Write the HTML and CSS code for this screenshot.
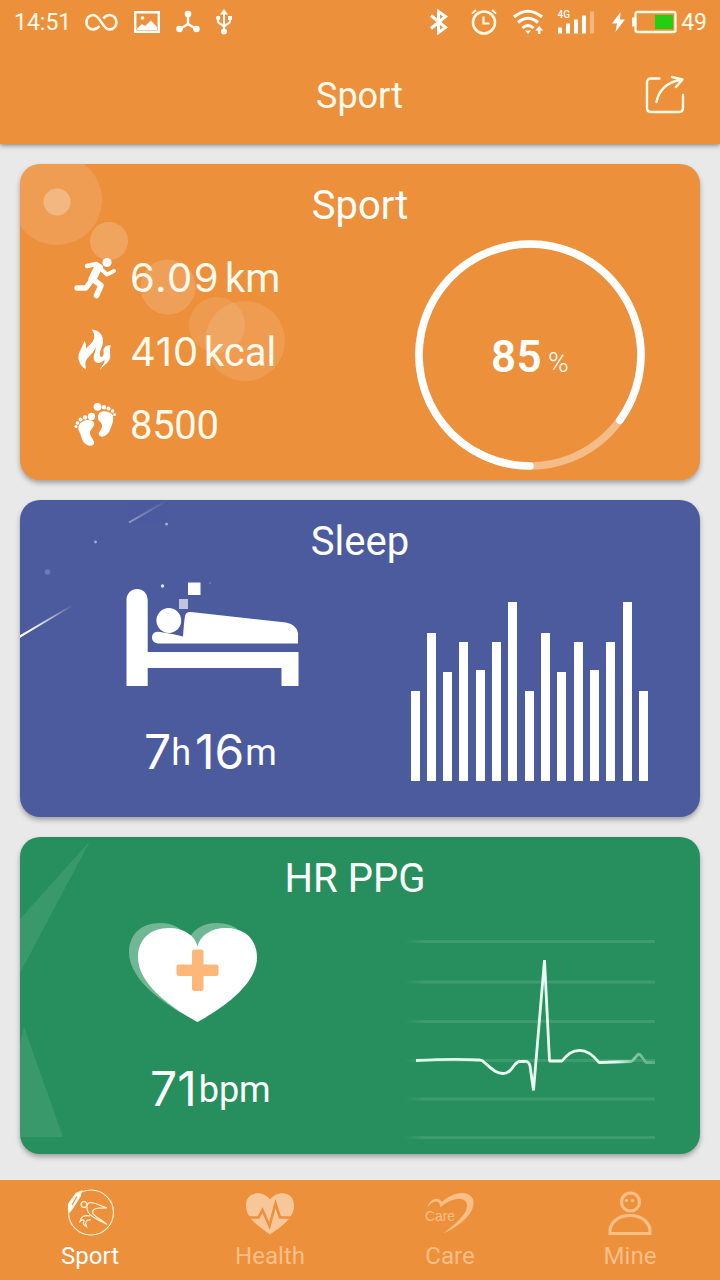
FILE: index.html
```html
<!DOCTYPE html>
<html lang="en">

<head>
  <meta charset="UTF-8">
  <meta name="viewport" content="width=device-width, initial-scale=1.0">
  <title>Sport</title>
  <link rel="stylesheet" href="styles.css">
</head>

<body>
  <header class="header">
    <div class="status-bar">
      <div class="status-left">
        <span class="time">14:51</span>
        <svg width="33" height="24" viewBox="0 0 33 24" fill="none" stroke="#fffbe8" stroke-width="2.6">
          <path d="M14.500 16C12.500 18.500 10.500 19.400 8.200 19.400C4.200 19.400 1.400 16.200 1.400 12.200C1.400 8.200 4.200 5 8.200 5C15.500 5 17 19.400 24.600 19.400C28.600 19.400 31.400 16.200 31.400 12.200C31.400 8.200 28.600 5 24.600 5C22.200 5 20.200 6.200 18.300 8.600" />
        </svg>
        <svg width="26" height="24" viewBox="0 0 26 24">
          <path d="M1.200 2.200h23.600v19.600H1.200z" fill="none" stroke="#fff" stroke-width="2.400" />
          <path d="M3 20v-1.500l5-4.500 3 2 6-5.500L23 17v3z" fill="#fff" />
          <circle cx="8.500" cy="8" r="1.800" fill="#fff" />
        </svg>
        <svg width="24" height="24" viewBox="0 0 24 24" fill="#fff">
          <path d="M12 3v11L4 19M12 14l8 5" fill="none" stroke="#fff" stroke-width="2.400" />
          <circle cx="12" cy="4" r="3.300" />
          <circle cx="3.500" cy="19" r="3.300" />
          <circle cx="20.500" cy="19" r="3.300" />
        </svg>
        <svg width="16" height="26" viewBox="0 0 16 26" fill="#fff">
          <path d="M8 3v20M2 8v4c0 3.500 6 3 6 6.500M14 8v4c0 3.500-6 3-6 6.500" fill="none" stroke="#fff" stroke-width="2" />
          <path d="M8 0l4 5.500H4z" />
          <circle cx="2.200" cy="9" r="2.200" />
          <path d="M12 7h4v4h-4z" />
          <circle cx="8" cy="22.500" r="3" />
        </svg>
      </div>
      <div class="status-right">
        <svg class="bluetooth" width="20" height="26" viewBox="0 0 20 26" fill="none" stroke="#fff" stroke-width="3">
          <path d="M2 6.500l14.500 12L9.500 23.500V2.500l7 5L2 19.500" />
        </svg>
        <svg class="alarm" width="26" height="26" viewBox="0 0 26 26" fill="none" stroke="#fffbe8" stroke-width="2.600">
          <circle cx="13" cy="13.500" r="11" />
          <path d="M12.500 7.500v7h6" stroke-width="2.200" />
          <path d="M1 4.500L5 1M25 4.500L21 1" stroke-width="2" />
        </svg>
        <svg class="wifi" width="30" height="26" viewBox="0 0 30 26" fill="none" stroke="#fff" stroke-width="3">
          <path d="M1 8Q15-3.500 29 8M5 13.500Q15 5 25 13.500M9.500 19Q15 14 20.500 19" />
          <path d="M12 21.500h6L15 25z" fill="#fff" stroke="none" />
          <path d="M26.200 17l4 4.500h-2.700V25h-2.600v-3.500h-2.700z" fill="#fff" stroke="none" />
        </svg>
        <svg class="signal" width="38" height="26" viewBox="0 0 38 26" fill="#fff">
          <text x="0.500" y="9" class="net">4G</text>
          <path d="M1 18.500h4v6H1zM9 14.500h4v10H9zM17 10.500h4v14h-4zM25 6.500h4v18h-4z" />
          <path d="M33 2.500h4v22h-4z" opacity="0.350" />
        </svg>
        <svg class="bolt" width="13" height="20" viewBox="0 0 13 20" fill="#fff">
          <path d="M8.500 0L0 11.500h5L3.500 20L13 7.500H8z" />
        </svg>
        <svg class="battery" width="45" height="24" viewBox="0 0 45 24">
          <path d="M0 7.500h3v9H0z" fill="#fff" />
          <rect x="3.500" y="2" width="40" height="20" rx="2" fill="none" stroke="#fffbe8" stroke-width="2.400" />
          <rect x="23" y="5" width="18" height="14" fill="#22cf12" />
        </svg>
        <span>49</span>
      </div>
    </div>
    <div class="title-bar">
      <h1>Sport</h1>
      <svg class="share" width="40" height="40" viewBox="0 0 40 40" fill="none" stroke="#fffbe8" stroke-width="2.400" stroke-linecap="round" stroke-linejoin="round">
        <path d="M14.500 3.500H6Q2 3.500 2 7.500V33Q2 37 6 37H34Q38 37 38 33V20" />
        <path d="M11.500 27C13.500 16 21 7.500 36.500 4.500M27 2L37.500 4.500L31 12" />
      </svg>
    </div>
  </header>

  <main class="cards">
    <section class="card sport">
      <svg class="decor" width="680" height="316" viewBox="0 0 680 316" fill="#fff">
        <circle cx="37" cy="36" r="45" opacity="0.120" />
        <circle cx="37" cy="38" r="13.500" opacity="0.280" />
        <circle cx="89" cy="77" r="19" opacity="0.190" />
        <circle cx="148" cy="123" r="27.500" opacity="0.150" />
        <circle cx="197" cy="161" r="28" opacity="0.100" />
        <circle cx="225" cy="177" r="40" opacity="0.110" />
      </svg>
      <h2>Sport</h2>
      <div class="card-body">
        <div class="stats">
          <div class="stat">
            <svg width="44" height="42" viewBox="0 0 44 42" fill="none" stroke="#fff" stroke-linecap="round" stroke-linejoin="round">
              <circle cx="33" cy="4.500" r="4.600" fill="#fff" stroke="none" />
              <path d="M13 8L22.500 6L27 9L18.500 21" stroke-width="4.400" />
              <path d="M24 9.500L18.500 21" stroke-width="8" />
              <path d="M28 12L33 16.500L40 13" stroke-width="4" />
              <path d="M18.500 21L12 30H3" stroke-width="5.400" />
              <path d="M20 22L27 27.500L22.500 37.500" stroke-width="5.600" />
            </svg>
            <span class="num decimal">6.09</span><span class="unit">km</span>
          </div>
          <div class="stat">
            <svg width="44" height="42" viewBox="0 0 44 42" fill="#fff">
              <path d="M17.500 -1.500C26 -1 29.500 5 29 11C28.800 16 25 20 26 24.500C27.500 28 30.500 24.500 29.500 20C29 16 34 13.500 37 14.500C34.500 18 37.500 23 35.500 28.500C33.500 33 28.500 34.500 26 39.500C27 34.500 31 32.500 30.500 28.500C27 33 21.500 33 20 29C18.500 24.500 22.500 20 21.500 16C20 21.500 15.500 24.500 13 28C10.500 31.500 11.500 35 12 38.500C6 35 2.500 28 5.500 21C7.500 17 9.500 13.500 10 10C12 12 12.500 14 12 17.500C17 13 24.500 7 17.500 -1.500Z" />
            </svg>
            <span class="num">410</span><span class="unit">kcal</span>
          </div>
          <div class="stat">
            <svg width="44" height="44" viewBox="0 0 44 44" fill="#fff">
              <path d="M5 21C8 16 18 14 20 19C21 23 16 25 16 29C16 33 21 36 20 40C18 43 12 42 9.500 38C7 34 7 30 5 27C4 25 4 23 5 21Z" />
              <path d="M24 12C25 6 33 6 38 10C41 14 38 21 36 26C34 31 29 34 26 32C22 29 29 26 28 21C27 17 23 17 24 12Z" />
              <circle cx="23.500" cy="2.800" r="3.900" /><circle cx="30" cy="3.200" r="2.200" /><circle cx="34.500" cy="4.600" r="2" /><circle cx="38.500" cy="7" r="1.800" /><circle cx="40.500" cy="10.500" r="1.600" />
              <circle cx="17.500" cy="12.500" r="3.700" /><circle cx="11" cy="13.500" r="2.200" /><circle cx="6.500" cy="15.500" r="2" /><circle cx="3.500" cy="19" r="1.800" /><circle cx="2" cy="22.500" r="1.600" />
            </svg>
            <span class="steps">8500</span>
          </div>
        </div>
        <div class="ring">
          <svg class="ring-track" width="230" height="230" viewBox="0 0 230 230" fill="none" stroke="#fff" stroke-width="7.600">
            <circle cx="115" cy="115" r="111" opacity="0.400" />
            <path d="M115 226A111 111 0 1 1 204.800 180.200" stroke-linecap="round" />
          </svg>
          <span class="percent">85</span><span class="percent-sign">%</span>
        </div>
      </div>
    </section>

    <section class="card sleep">
      <svg class="decor" width="680" height="317" viewBox="0 0 680 317">
        <defs>
          <linearGradient id="trail" x1="0" y1="1" x2="1" y2="0">
            <stop offset="0" stop-color="#fff" />
            <stop offset="1" stop-color="#fff" stop-opacity="0" />
          </linearGradient>
        </defs>
        <path d="M0 135.500L53 105L0 137.800Z" fill="url(#trail)" />
        <path d="M0 136.500L53 105" stroke="url(#trail)" stroke-width="2" />
        <path d="M109 22.500L148 0" stroke="url(#trail)" stroke-width="2" opacity="0.400" />
        <circle cx="146.500" cy="24" r="1.500" fill="#a3acd8" />
        <circle cx="75.500" cy="42" r="1.400" fill="#a3acd8" />
        <circle cx="27.500" cy="72" r="2.800" fill="#6c79b5" />
        <circle cx="142.500" cy="86" r="1.700" fill="#dfe3f5" />
        <circle cx="190" cy="83" r="0.800" fill="#8791c4" />
      </svg>
      <h2>Sleep</h2>
      <div class="card-body">
        <div class="reading sleep-reading">
          <svg width="174" height="106" viewBox="0 0 174 106" fill="#fff">
            <path d="M0.500 104V17.500a10.600 10.600 0 0 1 21.200 0V70H172.500v34h-17V86H21.700v18z" />
            <circle cx="42.800" cy="38.500" r="12.400" />
            <path d="M30 50Q32 49 57 54.500Q58 40 59 34Q60 29.500 65 30L160 40.500Q171 43 172 51V61.500H32Q26 60.500 26 55.500Q26 51 30 50Z" />
            <path d="M62 0.500h12.500V13H62z" />
            <path d="M53 17h9v10h-9z" opacity="0.650" />
          </svg>
          <div class="value"><span class="big">7</span><span class="small h">h</span><span class="big">16</span><span class="small m">m</span></div>
        </div>
        <div class="bars">
          <div class="bar" style="height: 90px"></div>
          <div class="bar" style="height: 148px"></div>
          <div class="bar" style="height: 109px"></div>
          <div class="bar" style="height: 139px"></div>
          <div class="bar" style="height: 111px"></div>
          <div class="bar" style="height: 139px"></div>
          <div class="bar" style="height: 179px"></div>
          <div class="bar" style="height: 90px"></div>
          <div class="bar" style="height: 148px"></div>
          <div class="bar" style="height: 109px"></div>
          <div class="bar" style="height: 139px"></div>
          <div class="bar" style="height: 111px"></div>
          <div class="bar" style="height: 139px"></div>
          <div class="bar" style="height: 179px"></div>
          <div class="bar" style="height: 90px"></div>
        </div>
      </div>
    </section>

    <section class="card heart">
      <svg class="decor" width="680" height="317" viewBox="0 0 680 317" fill="#fff">
        <path d="M0 82L70 4L0 136Z" opacity="0.090" />
        <path d="M4 190L43 300H0V207Z" opacity="0.090" />
      </svg>
      <h2>HR PPG</h2>
      <div class="card-body">
        <div class="reading heart-reading">
          <svg width="130" height="101" viewBox="0 0 130 100" fill="#fff">
            <path d="M69.500 99.500C50 89 10 64 10 35C10 17 22 5.500 41 5.500C56 5.500 67 13 69.500 24C72 13 83 5.500 98 5.500C117 5.500 129 17 129 35C129 64 89 89 69.500 99.500Z" transform="translate(-9 -5)" opacity="0.350" />
            <path d="M69.500 99.500C50 89 10 64 10 35C10 17 22 5.500 41 5.500C56 5.500 67 13 69.500 24C72 13 83 5.500 98 5.500C117 5.500 129 17 129 35C129 64 89 89 69.500 99.500Z" />
            <rect x="64" y="27" width="11.500" height="41.500" rx="2.500" fill="#fdb879" />
            <rect x="48.500" y="42" width="42" height="11.500" rx="2.500" fill="#fdb879" />
          </svg>
          <div class="value"><span class="big">71</span><span class="small bpm">bpm</span></div>
        </div>
        <svg class="ecg" width="252" height="204" viewBox="0 0 252 204" fill="none">
          <defs>
            <linearGradient id="grid" gradientUnits="userSpaceOnUse" x1="0" y1="0" x2="251" y2="0">
              <stop offset="0" stop-color="#fff" stop-opacity="0" />
              <stop offset="0.080" stop-color="#fff" stop-opacity="0.110" />
              <stop offset="1" stop-color="#fff" stop-opacity="0.110" />
            </linearGradient>
            <linearGradient id="pulse" gradientUnits="userSpaceOnUse" x1="0" y1="0" x2="251" y2="0">
              <stop offset="0" stop-color="#d9f7e6" />
              <stop offset="0.400" stop-color="#eafff4" />
              <stop offset="0.840" stop-color="#eafff4" />
              <stop offset="0.900" stop-color="#8dccab" />
              <stop offset="1" stop-color="#5aab82" />
            </linearGradient>
          </defs>
          <path d="M0 4h251v3H0zM0 44.500h251v3H0zM0 84h251v3H0zM0 123h251v3H0zM0 161.500h251v3H0zM0 200h251v3H0z" fill="url(#grid)" />
          <path d="M12 124.500Q50 122.500 75 124Q78 123.500 81 127C88 133 92 137.500 99 137.500C109 137.500 109 125.500 116 125.500H120Q125 125 126 130L129.500 154.500L140.500 24L145.500 125H158C168 111.500 182 109.500 195 126.500L226 125.500Q228 126 230 123L234 118.500Q235 117.500 236.500 119L242 126.500H251" stroke="url(#pulse)" stroke-width="2.800" stroke-linejoin="bevel" />
        </svg>
      </div>
    </section>
  </main>

  <nav class="tabs">
    <a class="tab active">
      <svg width="48" height="48" viewBox="0 0 48 48" fill="none" stroke="#fff3dc" stroke-width="1.200">
        <circle cx="25" cy="24.500" r="22.500" />
        <path d="M2.500 21V16L10 5.500L15.500 3L14 8.500L6.500 20.500L3.500 24Z" fill="#fff" />
        <path d="M6 17L11 8.500" stroke="#ed903b" />
        <circle cx="18" cy="16.500" r="2.900" />
        <path d="M41 20C35 18 29 14.500 24 14.500C20.500 15 20 21 22.500 24.500C26 30.500 34 32 41 36.500C36 31.500 29 29.500 27 25.500C25.500 21.500 29 19.500 41 20Z" />
        <path d="M24 28C18.500 26.500 14.500 29 14 33.500C16 31.500 17.500 31.500 18 33C16.500 35.500 18 37.500 20.500 38.500C18.500 34.500 20 31 25 32" />
      </svg>
      <span>Sport</span>
    </a>
    <a class="tab">
      <svg width="50" height="48" viewBox="0 0 50 48">
        <path d="M25 46.500C16 40 1 31 1 18C0.500 3 18 2 25 11.500C32 2 49.500 3 49 18C49 31 34 40 25 46.500Z" fill="#f8c799" />
        <path d="M1 29.500H13.500L17.500 22L24.500 38L30.500 15.500L35 29.500H49" fill="none" stroke="#ed903b" stroke-width="2.600" />
      </svg>
      <span>Health</span>
    </a>
    <a class="tab">
      <svg width="50" height="48" viewBox="0 0 50 48" fill="#fabf87">
        <path d="M2 20C4 12 12 7 17 14C25 6 42 0 48 11C52 24 35 38 18 45.500C31 36 46 23 41 14C36 7 24 12 15 19.500C16 13 9 10 2 20Z" />
        <text x="0" y="33" class="care-word" textLength="30" lengthAdjust="spacingAndGlyphs">Care</text>
      </svg>
      <span>Care</span>
    </a>
    <a class="tab">
      <svg width="46" height="48" viewBox="0 0 46 48" fill="none" stroke="#fabf87" stroke-width="3.200">
        <circle cx="23.500" cy="14" r="9" />
        <path d="M3 45.500C2 35 11 27.500 23 27.500C35 27.500 44 35 43 45.500Z" />
        <circle cx="19.500" cy="12.500" r="1.700" fill="#fabf87" stroke="none" />
        <circle cx="25.500" cy="12.500" r="1.700" fill="#fabf87" stroke="none" />
      </svg>
      <span>Mine</span>
    </a>
  </nav>
</body>

</html>
```
FILE: styles.css
```css
* {
  box-sizing: border-box;
}

body {
  margin: 0;
  height: 1280px;
  display: flex;
  flex-direction: column;
  background-color: #eae9e9;
  font-family: Roboto, "Liberation Sans", sans-serif;
  color: white;
  overflow: hidden;
}

h1,
h2 {
  margin: 0;
  font-weight: 400;
  text-align: center;
}

svg {
  display: block;
  flex-shrink: 0;
  overflow: visible;
}

.header {
  height: 144px;
  background-color: #ed903b;
  box-shadow: 0 1px 5px rgba(0, 0, 0, 0.5);
}

.status-bar {
  display: flex;
  justify-content: space-between;
  height: 44px;
  padding: 0 13px 0 14px;
  font-size: 23px;
  color: #fffbe8;
}

.status-left,
.status-right {
  display: flex;
  align-items: center;
}

.status-left {
  gap: 16px;
}

.time {
  width: 55px;
}

.bluetooth {
  margin-right: 22px;
}

.alarm {
  margin-right: 16px;
}

.wifi {
  margin-right: 14px;
}

.signal {
  margin-right: 17px;
}

.bolt {
  margin-right: 7px;
}

.battery {
  margin-right: 4px;
}

.net {
  font-size: 10px;
  font-weight: 500;
}

.title-bar {
  display: flex;
  align-items: center;
  padding: 0 35px 0 74px;
  height: 102px;
}

.title-bar h1 {
  flex: 1;
  padding-top: 2px;
  font-size: 36px;
  color: #fffbee;
}

.cards {
  flex: 1;
  display: flex;
  flex-direction: column;
  gap: 20px;
  padding: 20px;
}

.card {
  position: relative;
  height: 317px;
  padding-top: 18px;
  border-radius: 20px;
  box-shadow: 0 3px 5px rgba(0, 0, 0, 0.3);
}

.card h2 {
  position: relative;
  font-size: 40px;
  line-height: 48px;
}

.card-body {
  position: relative;
  display: flex;
  margin-top: -1px;
}

.decor {
  position: absolute;
  top: 0;
  left: 0;
  border-radius: 20px;
  overflow: hidden;
}

.sport {
  height: 316px;
  background-color: #ed903b;
}

.sleep {
  background-color: #4c5b9e;
}

.heart {
  background-color: #268f5d;
}

.heart h2 {
  padding-right: 10px;
}

.stats {
  width: 395px;
  padding: 13px 0 0 54px;
  color: #fffbee;
}

.stat {
  display: flex;
  align-items: center;
  height: 73.5px;
  font-size: 40px;
}

.num {
  margin: -2px 0 0 12px;
  font-family: Inter, sans-serif;
  font-weight: 400;
  letter-spacing: 0.8px;
}

.decimal {
  letter-spacing: 1.5px;
}

.unit {
  margin-left: 5px;
}

.steps {
  margin-left: 12px;
  letter-spacing: -0.3px;
}

.ring {
  position: relative;
  display: flex;
  align-items: baseline;
  width: 230px;
  height: 230px;
  margin-top: 11px;
  padding: 91px 0 0 76px;
}

.ring-track {
  position: absolute;
  top: 0;
  left: 0;
}

.percent {
  font-size: 44px;
  font-weight: 600;
  letter-spacing: 0.3px;
}

.percent-sign {
  margin-left: 6px;
  font-size: 28px;
  font-weight: 300;
}

.reading {
  width: 384px;
}

.sleep-reading {
  padding: 17px 0 0 106px;
}

.heart-reading {
  padding: 20px 0 0 108px;
}

.value {
  display: flex;
  align-items: center;
  height: 56px;
  margin: 35px 0 0 18px;
}

.heart-reading .value {
  margin: 37px 0 0 22px;
}

.big {
  font-family: Inter, sans-serif;
  font-size: 48px;
  font-weight: 400;
}

.small {
  padding-top: 3px;
  font-size: 36px;
}

.h {
  margin-right: 4px;
}

.m {
  margin-left: 1px;
}

.bpm {
  margin-left: 2px;
}

.bars {
  display: flex;
  align-items: flex-end;
  justify-content: space-between;
  width: 237.500px;
  height: 216px;
  margin-left: 6.500px;
}

.bar {
  width: 9px;
  background-color: white;
}

.ecg {
  margin-top: 34px;
}

.tabs {
  display: flex;
  height: 100px;
  padding-top: 8px;
  background-color: #ed903b;
}

.tab {
  flex: 1;
  display: flex;
  flex-direction: column;
  align-items: center;
  gap: 6px;
  font-size: 24px;
  color: #fabf87;
}

.active {
  color: white;
}

.care-word {
  font-family: "Liberation Sans", sans-serif;
  font-size: 15px;
}
```
